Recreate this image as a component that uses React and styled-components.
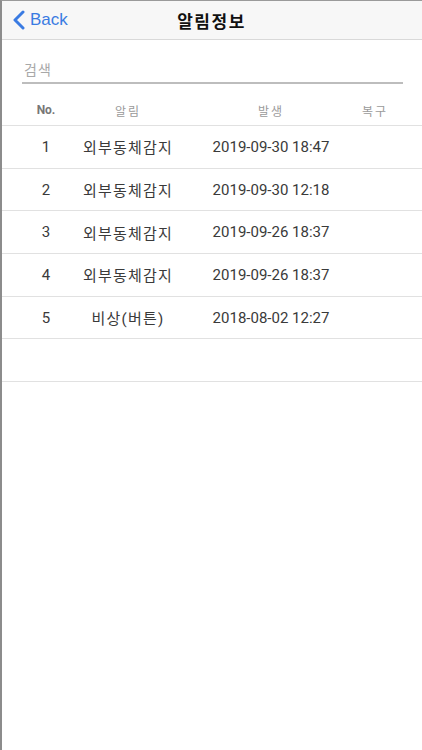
import React from "react";
import styled, { createGlobalStyle } from "styled-components";

const alarms = [
  { no: 1, name: "외부동체감지", at: "2019-09-30 18:47", recovered: "" },
  { no: 2, name: "외부동체감지", at: "2019-09-30 12:18", recovered: "" },
  { no: 3, name: "외부동체감지", at: "2019-09-26 18:37", recovered: "" },
  { no: 4, name: "외부동체감지", at: "2019-09-26 18:37", recovered: "" },
  { no: 5, name: "비상(버튼)", at: "2018-08-02 12:27", recovered: "" },
];

const GlobalStyle = createGlobalStyle`
  html, body {
    margin: 0;
    padding: 0;
    background: #fff;
  }
  body {
    font-family: Roboto, "Noto Sans CJK KR", sans-serif;
  }
`;

const App = () => {
  return (
    <Screen>
      <GlobalStyle />
      <NavBar>
        <BackButton>
          <svg width="14" height="20" viewBox="0 0 14 20">
            <path
              d="M11 2 L3 10 L11 18"
              fill="none"
              stroke="#3a7be2"
              strokeWidth="3"
              strokeLinecap="round"
              strokeLinejoin="round"
            />
          </svg>
          Back
        </BackButton>
        <Title>알림정보</Title>
      </NavBar>
      <SearchField>
        <SearchInput placeholder="검색" />
      </SearchField>
      <Table>
        <HeadRow>
          <HeadCell $col={1} $strong>
            No.
          </HeadCell>
          <HeadCell $col={2}>알림</HeadCell>
          <HeadCell $col={4}>발생</HeadCell>
          <HeadCell $col={5}>복구</HeadCell>
        </HeadRow>
        {alarms.map((a) => (
          <Row key={a.no}>
            <Cell $col={1}>{a.no}</Cell>
            <Cell $col={2} $kr>
              {a.name}
            </Cell>
            <Cell $col={4}>{a.at}</Cell>
            <Cell $col={5}>{a.recovered}</Cell>
          </Row>
        ))}
        <Row />
      </Table>
    </Screen>
  );
};

const Screen = styled.div`
  box-sizing: border-box;
  width: 422px;
  height: 750px;
  border-top: 1px solid #9a9a9a;
  border-left: 2px solid #8c8c8c;
  background: #fff;
  overflow: hidden;
`;

const NavBar = styled.header`
  position: relative;
  height: 38px;
  display: flex;
  align-items: center;
  justify-content: center;
  background: #f7f7f7;
  border-bottom: 1px solid #d9d9d9;
`;

const BackButton = styled.button`
  position: absolute;
  left: 10px;
  top: 0;
  bottom: 0;
  display: flex;
  align-items: center;
  gap: 4px;
  padding: 0;
  border: none;
  background: none;
  color: #3a7be2;
  font-family: "Liberation Sans", Arial, sans-serif;
  font-size: 17px;
`;

const Title = styled.h1`
  margin: 0 0 0 -1px;
  font-family: "Noto Sans CJK KR", sans-serif;
  font-size: 17px;
  font-weight: 700;
  letter-spacing: 1.5px;
  color: #111;
`;

const SearchField = styled.div`
  padding: 18px 19px 0 20px;
`;

const SearchInput = styled.input`
  box-sizing: border-box;
  width: 100%;
  height: 26px;
  padding: 0 2px 2px;
  border: none;
  border-bottom: 2px solid #bdbdbd;
  outline: none;
  background: transparent;
  font-family: "Noto Sans CJK KR", sans-serif;
  font-size: 14px;
  letter-spacing: 1px;
  color: #333;
  &::placeholder {
    color: #a8a8a8;
  }
`;

const Table = styled.div`
  margin-top: 13px;
`;

const grid = `
  display: grid;
  grid-template-columns: 88px 76px 34px 142px 66px;
  align-items: center;
  box-sizing: border-box;
  border-bottom: 1px solid #e1e1e1;
`;

const HeadRow = styled.div`
  ${grid}
  height: 29px;
  padding-bottom: 2px;
`;

const Row = styled.div`
  ${grid}
  height: 42.7px;
`;

const Cell = styled.div`
  grid-column: ${(p) => p.$col};
  display: flex;
  justify-content: center;
  white-space: nowrap;
  font-family: Roboto, "Noto Sans CJK KR", sans-serif;
  font-size: 15px;
  letter-spacing: ${(p) => (p.$kr ? "1.2px" : "0")};
  color: #3a3a3a;
`;

const HeadCell = styled(Cell)`
  font-size: 12px;
  letter-spacing: ${(p) => (p.$strong ? "0" : "2px")};
  font-weight: ${(p) => (p.$strong ? 700 : 400)};
  color: ${(p) => (p.$strong ? "#777" : "#9a9a9a")};
`;

export default App;
